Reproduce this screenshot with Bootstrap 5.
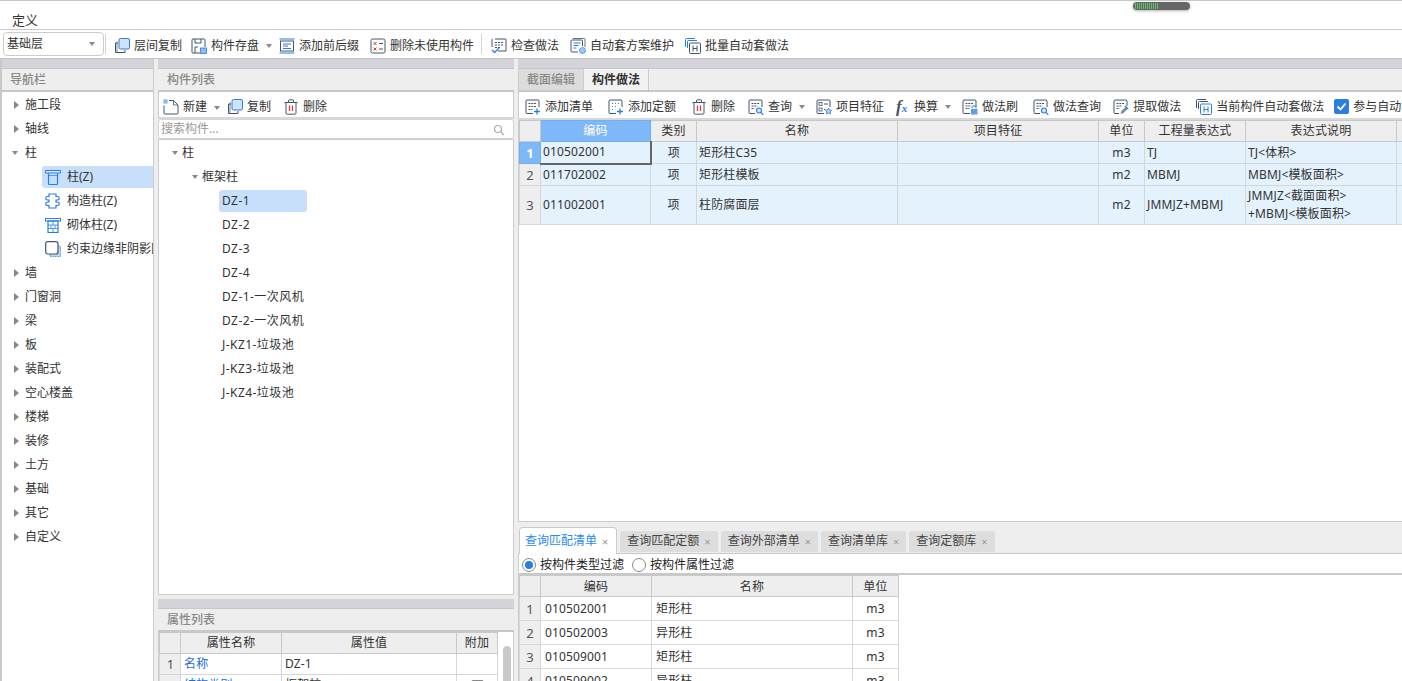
<!doctype html>
<html lang="zh-CN">
<head>
<meta charset="utf-8">
<title>定义</title>
<link href="https://cdn.jsdelivr.net/npm/bootstrap@5.3.0/dist/css/bootstrap.min.css" rel="stylesheet">
<style>
html,body{height:100%;overflow:hidden}
body{font:12px/1.4 "Noto Sans","Noto Sans CJK SC",sans-serif;color:#333;background:#eee}
.app{height:681px;width:1402px;position:relative;overflow:hidden}
.menu-row{height:30px;background:#fff;border-top:1px solid #c8c8c8;border-bottom:1px solid #c8c8c8;padding:10px 0 0 12px;font-size:13px;line-height:18px}
.tool-top{height:28px;background:#fff;padding:4px 0 0 3px}
.level-sel{width:101px;height:24px;border:1px solid #ccc;border-radius:4px;padding:0 0 0 3px;font-size:12px;margin-top:-4px}
.tb-sep{width:1px;height:20px;background:#d4d4d4;margin-top:-4px}
.tb-item{gap:4px;white-space:nowrap;flex:none}
.ic{width:16px;height:16px;flex:none;display:block}
.car-d{width:0;height:0;border-left:3px solid transparent;border-right:3px solid transparent;border-top:4px solid #888;flex:none}
.car-r{width:0;height:0;border-top:4px solid transparent;border-bottom:4px solid transparent;border-left:5px solid #888;flex:none}
.car-nav{margin:0 1px 0 -2px}
.main-area{height:623px;border-top:1px solid #c4c4c4;padding-left:0}
.pane-nav{width:154px;flex:none;border-left:2px solid #c8c8c8;background:#fff;border-right:1px solid #ccc}
.pane-mid{width:356px;flex:none;margin-left:4px}
.pane-right{width:884px;flex:none;margin-left:4px;min-width:0}
.cap-bar{height:10px;background:#d2d4d9;border-bottom:1px solid #c8c8c8;flex:none}
.title-bar{height:23px;background:#eee;border-bottom:2px solid #c8c8c8;padding:1px 0 0 9px;color:#888;font-weight:500;line-height:20px;flex:none}
.pane-nav .title-bar{padding-left:8px}
.nav-list{padding-top:1px}
.nav-row{height:24px;padding-left:12px;gap:6px;white-space:nowrap}
.nav-sub{height:24px;padding:1px 0 1px 40px;white-space:nowrap;overflow:hidden}
.nav-sub-in{height:22px;width:112px;gap:6px;padding-left:3px;border-radius:3px 0 0 3px;flex:none}
.nav-on{background:#c7dffa}
.bar-white{background:#fff;border-left:1px solid #ccc;border-right:1px solid #ccc;flex:none}
.bar-mid{height:27px;border-bottom:2px solid #d8d8d8;padding:6px 0 0 4px}
.search-row{height:20px;background:#fff;border:1px solid #d4d4d4;border-radius:3px;padding:1px 8px 0 2px;color:#999;flex:none;font-size:12px}
.tree{background:#fff;border:1px solid #ccc;height:456px;flex:none;padding-top:1px}
.tree-row{height:24px;white-space:nowrap;gap:4px}
.t1{padding-left:13px}.t2{padding-left:33px}.t3{padding-left:60px}
.tree-leaf{height:22px;width:88px;border-radius:3px;padding-left:3px;flex:none;letter-spacing:.45px}
.attr-pane{margin-top:4px}
.tabs-top{height:23px;background:#eee;border-bottom:2px solid #c8c8c8;flex:none;padding-left:0;border-left:1px solid #ccc}
.tp-off{width:65px;background:#dcdcdc;color:#888;font-weight:500;text-align:center;line-height:21px;border-right:1px solid #ccc}
.tp-on{width:65px;background:#f2f2f2;font-weight:700;text-align:center;line-height:21px;border-right:1px solid #ccc}
.bar-right{height:28px;border-bottom:2px solid #d8d8d8;padding:4px 0 0 6px;overflow:hidden;border-right:0}
.gt-wrap{background:#fff;border-left:1px solid #ccc;overflow:hidden}
.gt-up{height:402px;border-bottom:1px solid #ccc;border-right:0;flex:none}
.gt.table{table-layout:fixed;margin:0;border-collapse:collapse;--bs-table-bg:transparent;color:#333;border-color:#d6d6d6;font-size:12px}
.gt.table>:not(caption)>*>*{padding:0 2px;border:1px solid #d6d6d6;line-height:18px;vertical-align:middle;box-shadow:none;white-space:nowrap;overflow:hidden;color:#333;letter-spacing:.15px}
.gt.table>thead>tr>*{background:#eee;text-align:center;font-weight:400;border-color:#c8c8c8}
.gt.table>tbody>tr>.rn{background:#eee;text-align:center;color:#555;font-size:13px}
.tbl-up{width:917px}
.tbl-up thead tr{height:21px}
.tbl-up tbody tr{height:22px}
.tbl-up tbody tr.row-tall{height:39px}
.tbl-up tbody td{background:#e3f2fd}
.gt.table>thead>tr>.hd-on{background:#7fb8f8;color:#fff;border-color:#6fb0f5}
.gt.table>tbody>tr>.rn-on{background:#7fb8f8;color:#fff;font-weight:700;border-color:#6fb0f5}
.gt.table>tbody>tr>.cell-on{border-right:2px solid #666;border-bottom:2px solid #666}
.tc{text-align:center}
.c21{width:21px}.c110{width:110px}.c46{width:46px}.c201{width:201px}.c101{width:101px}.c151{width:151px}.c40{width:40px}.c111{width:111px}.c175{width:175px}.c41{width:41px}
.gap-row{height:5px;background:#eee;flex:none}
.btabs{height:27px;background:#eee;border-bottom:1px solid #c8c8c8;flex:none;padding-left:1px;gap:3px}
.btab{height:21px;background:#ddd;border-radius:3px 3px 0 0;padding:0 7px;gap:5px;white-space:nowrap;margin-top:4px;flex:none;color:#444}
.btab-on{height:27px;margin-top:0;background:#fff;border:1px solid #ccc;border-bottom:0;border-radius:4px 4px 0 0;color:#2a8cf0;padding:0 8px 0 5px;position:relative;z-index:1}
.btab .x{color:#999;font-size:11px;line-height:1}
.flt{height:21px;background:#fff;border-bottom:2px solid #c8c8c8;border-left:1px solid #ccc;padding:3px 0 0 3px;flex:none;color:#222}
.rad{width:14px;height:14px;border:1px solid #888;border-radius:50%;flex:none;background:#fff;display:flex;align-items:center;justify-content:center}
.rad-on::after{content:"";width:8px;height:8px;border-radius:50%;background:#2a7de1}
.tbl-low{width:379px}
.tbl-low thead tr{height:21px}
.tbl-low tbody tr{height:24px}
.gt.tbl-low>thead>tr>th{padding-top:1px}
.gt.tbl-low>tbody>tr>td{padding-left:4px}
.gt.tbl-low>tbody>tr>td.tc,.gt.tbl-low>tbody>tr>td.rn{padding-left:2px}
.tbl-attr{width:338px;flex:none}
.tbl-attr thead tr{height:21px}
.tbl-attr tbody tr{height:21px}
.gt.tbl-attr>tbody>tr>td{padding-left:3px}
.gt.table>tbody>tr>.lnk{color:#1f6be0}
.attr-body{height:60px;background:#fff;border-left:1px solid #ccc;border-right:1px solid #ccc;overflow:hidden}
.attr-scroll{width:16px;flex:none;background:#fff;padding-left:5px;padding-top:14px}
.attr-thumb{width:8px;height:60px;background:#c9c9c9;border-radius:4px}
.chk-mini{width:13px;height:13px;border:1px solid #888;border-radius:2px;margin:2px auto 0}
.auto-chk{width:15px;height:15px;border-radius:2px;background:#2a7de1;flex:none;display:flex;align-items:center;justify-content:center}
.fx-ic{font:italic 700 17px/16px "Liberation Serif",serif;color:#44546a;width:14px;height:16px;flex:none;white-space:nowrap}
.fx-ic span{font-size:11px;color:#2a7de1}
.hscroll{position:absolute;left:1133px;top:2px;width:57px;height:8px;background:#666;border-radius:4px;box-shadow:0 1px 3px rgba(0,0,0,.3);padding:1px 0 1px 2px;gap:1px;overflow:hidden}
.hscroll i{width:1px;height:6px;background:#5fc06a;flex:none}
.g1{margin-left:1px}.g8{margin-left:8px}.g9{margin-left:9px}.g10{margin-left:10px}.g11{margin-left:11px}.g12{margin-left:12px}.g13{margin-left:13px}.g15{margin-left:15px}.g7{margin-left:7px}
</style>
</head>
<body>
<svg width="0" height="0" class="position-absolute">
<defs>
<symbol id="i-copy" viewBox="0 0 16 16"><path d="M4 5H1.500v9.500H11V12" fill="none" stroke="#44546a"/><path d="M3 3.500V14" fill="none" stroke="#44546a" stroke-width=".7"/><rect x="5" y=".5" width="10.500" height="10.500" rx="1.500" fill="#cfe2fb" stroke="#2a7de1"/></symbol>
<symbol id="i-save" viewBox="0 0 16 16"><path d="M9 15H2a1 1 0 0 1-1-1V2a1 1 0 0 1 1-1h11a1 1 0 0 1 1 1v7" fill="none" stroke="#44546a"/><path d="M4 1v4h6V1M4 15V9h3" fill="none" stroke="#44546a"/><rect x="9.500" y="10" width="6" height="5.500" fill="#8fbdf3" stroke="#2a7de1" stroke-width=".8"/></symbol>
<symbol id="i-pre" viewBox="0 0 16 16"><path d="M.5 1h15M.5 15h15" stroke="#2a7de1" fill="none"/><rect x="1.500" y="3" width="13" height="10" fill="none" stroke="#44546a"/><path d="M4 6h8M4 8h5M4 10.500h8" stroke="#2a7de1" fill="none"/></symbol>
<symbol id="i-del-un" viewBox="0 0 16 16"><rect x="1" y="1" width="14" height="14" rx="1.500" fill="none" stroke="#44546a"/><path d="M3.500 4l3 3m0-3l-3 3M3.500 9.500l3 3m0-3l-3 3" stroke="#e5383b" fill="none"/><path d="M9 5.500h4M9 11h4" stroke="#44546a" fill="none"/></symbol>
<symbol id="i-check" viewBox="0 0 16 16"><path d="M4 1h10.500a.5.5 0 0 1 .5.5V13H7M1 9V1.500a.5.5 0 0 1 .5-.5" fill="none" stroke="#44546a"/><path d="M4 4.500h8M4 7h8M4 9.500h5" stroke="#44546a" stroke-dasharray="2 1"/><path d="M1 12l2.500 2.500L8 10" fill="none" stroke="#2a7de1" stroke-width="1.300"/></symbol>
<symbol id="i-auto" viewBox="0 0 16 16"><path d="M3 1V.5h11a1 1 0 0 1 1 1V9" fill="none" stroke="#44546a" stroke-width=".8"/><path d="M8 14H2a1 1 0 0 1-1-1V3a1 1 0 0 1 1-1h9.500a1 1 0 0 1 1 1v5" fill="none" stroke="#44546a"/><path d="M3.500 5h7M3.500 7.500h5M3.500 10h3" stroke="#2a7de1"/><circle cx="12.500" cy="12.500" r="3" fill="#9cc5f5" stroke="#2a7de1" stroke-dasharray="1.500 .7"/></symbol>
<symbol id="i-batch" viewBox="0 0 16 16"><path d="M.5 9V1.500a1 1 0 0 1 1-1H10M2.500 10V3.500a1 1 0 0 1 1-1H12" fill="none" stroke="#2a7de1"/><rect x="4.500" y="5" width="11" height="10.500" rx="1" fill="none" stroke="#44546a"/><path d="M8 7.500v6M12 7.500v6M8 10.500h4" stroke="#44546a" fill="none"/></symbol>
<symbol id="i-cur" viewBox="0 0 16 16"><path d="M.5 9V1.500a1 1 0 0 1 1-1H10M2.500 10V3.500a1 1 0 0 1 1-1H12" fill="none" stroke="#44546a"/><rect x="4.500" y="5" width="11" height="10.500" rx="1" fill="#fff" stroke="#2a7de1"/><path d="M8 7.500v6M12 7.500v6M8 10.500h4" stroke="#2a7de1" fill="none"/></symbol>
<symbol id="i-col" viewBox="0 0 16 16"><path d="M.5 1.500h15v2.500H.5z" fill="#dbe9fc" stroke="#2a7de1"/><path d="M3.500 4.500v10a1 1 0 0 0 1 1h7a1 1 0 0 0 1-1v-10" fill="none" stroke="#2a7de1" stroke-width="1.200"/><path d="M3 6.500h10" stroke="#2a7de1" stroke-width=".7"/></symbol>
<symbol id="i-cog" viewBox="0 0 16 16"><path d="M4 1h7v2.500h1.500a1.500 1.500 0 0 1 0 3.500H11v2h1.500a1.500 1.500 0 0 1 0 3.500H11V15H4v-2.500H2.500a1.500 1.500 0 0 1 0-3.500H4V7H2.500a1.500 1.500 0 0 1 0-3.500H4z" fill="none" stroke="#2a7de1" stroke-width="1.200"/></symbol>
<symbol id="i-brick" viewBox="0 0 16 16"><rect x=".5" y="1.500" width="15" height="2.500" fill="none" stroke="#2a7de1"/><rect x="3" y="4" width="10" height="11.500" fill="none" stroke="#2a7de1" stroke-width="1.200"/><path d="M3 8h10M3 11.500h10M8 4v4M6 8v3.500M10 8v3.500M8 11.500v4" stroke="#2a7de1" stroke-width=".8"/></symbol>
<symbol id="i-edge" viewBox="0 0 16 16"><path d="M13 5h2.500v10.500H5V13" fill="#bcd7f8" stroke="#2a7de1" stroke-width=".8" stroke-dasharray="1 .6"/><rect x=".7" y=".7" width="12.300" height="12.300" rx="2" fill="#fff" stroke="#44546a" stroke-width="1.200"/></symbol>
<symbol id="i-new" viewBox="0 0 16 16"><path d="M6 1.500h4.500L15 6v8a1 1 0 0 1-1 1H2a1 1 0 0 1-1-1V6.500" fill="none" stroke="#44546a"/><path d="M10.500 1.500V6H15" fill="none" stroke="#44546a" stroke-width=".8"/><path d="M.5.500h4v4h-4z" fill="#6aa5ee"/><path d="M1.500 1.500l2 2m0-2l-2 2" stroke="#fff" stroke-width=".6"/></symbol>
<symbol id="i-trash" viewBox="0 0 16 16"><path d="M1.500 3.500h13M5.500 3.500V1.500a.7.7 0 0 1 .7-.7h3.600a.7.7 0 0 1 .7.700v2" fill="none" stroke="#44546a"/><path d="M3 3.500v10.500a1.200 1.200 0 0 0 1.200 1.200h7.600a1.200 1.200 0 0 0 1.200-1.200V3.500" fill="none" stroke="#44546a"/><path d="M6.500 6.500v5.500M9.500 6.500v5.500" stroke="#e5383b" stroke-width="1.300"/></symbol>
<symbol id="i-addl" viewBox="0 0 16 16"><path d="M8 14.500H2a1 1 0 0 1-1-1V2a1 1 0 0 1 1-1h11a1 1 0 0 1 1 1v6" fill="none" stroke="#44546a"/><path d="M3.500 4.500h8M3.500 7.500h8M3.500 10.500h4" stroke="#44546a" stroke-dasharray="2 .8"/><path d="M12 9.500v6M9 12.500h6" stroke="#2a7de1" stroke-width="1.300"/></symbol>
<symbol id="i-addq" viewBox="0 0 16 16"><path d="M8 14.500H2a1 1 0 0 1-1-1V2a1 1 0 0 1 1-1h11a1 1 0 0 1 1 1v6" fill="none" stroke="#44546a"/><path d="M4 4.500h1M7 4.500h1M10 4.500h1M4 7.500h1M7 7.500h1M4 10.500h1" stroke="#2a7de1"/><path d="M12 9.500v6M9 12.500h6" stroke="#2a7de1" stroke-width="1.300"/></symbol>
<symbol id="i-query" viewBox="0 0 16 16"><path d="M7 14.500H2a1 1 0 0 1-1-1V2a1 1 0 0 1 1-1h11a1 1 0 0 1 1 1v6" fill="none" stroke="#44546a"/><path d="M3.500 4.500h8M3.500 7h6M3.500 9.500h3" stroke="#44546a" stroke-dasharray="2 .8"/><circle cx="11" cy="11.500" r="2.500" fill="#d6e6fb" stroke="#2a7de1" stroke-width="1.100"/><path d="M13 13.500l2.300 2.300" stroke="#2a7de1" stroke-width="1.200"/></symbol>
<symbol id="i-item" viewBox="0 0 16 16"><path d="M8 14.500H2a1 1 0 0 1-1-1V2a1 1 0 0 1 1-1h11a1 1 0 0 1 1 1v6" fill="none" stroke="#44546a"/><rect x="3" y="3.500" width="3" height="3" fill="none" stroke="#44546a" stroke-width=".8"/><rect x="3" y="9" width="3" height="3" fill="none" stroke="#44546a" stroke-width=".8"/><path d="M8 5h4M8 10.500h1" stroke="#44546a"/><path d="M12.500 9l1 2 2.200.3-1.600 1.500.4 2.200-2-1.100-2 1.100.4-2.200-1.600-1.500 2.200-.3z" fill="#bcd7f8" stroke="#2a7de1" stroke-width=".8"/></symbol>
<symbol id="i-brush" viewBox="0 0 16 16"><path d="M8 14.500H2a1 1 0 0 1-1-1V2a1 1 0 0 1 1-1h11a1 1 0 0 1 1 1v6" fill="none" stroke="#44546a"/><path d="M3.500 4.500h8M3.500 7h6M3.500 9.500h4" stroke="#44546a" stroke-dasharray="2 .8"/><path d="M10 9.500v-.7a2 2 0 0 1 4 0v.7" fill="none" stroke="#2a7de1"/><rect x="9" y="10" width="6.500" height="5.500" fill="#5f9deb"/></symbol>
<symbol id="i-ext" viewBox="0 0 16 16"><path d="M6 14.500H2a1 1 0 0 1-1-1V2a1 1 0 0 1 1-1h11a1 1 0 0 1 1 1v5" fill="none" stroke="#44546a"/><path d="M3.500 4.500h8M3.500 7h5M3.500 9.500h3" stroke="#44546a" stroke-dasharray="2 .8"/><path d="M7.500 15l1-3 4-4 2 2-4 4z" fill="#7a8aa0"/><path d="M12 7l3 3" stroke="#2a7de1" stroke-width="1.400"/></symbol>
</defs>
</svg>

<div class="app d-flex flex-column">
  <div class="menu-row">定义</div>
  <div class="tool-top d-flex align-items-center">
    <div class="level-sel d-flex align-items-center justify-content-between pe-1"><span>基础层</span><span class="car-d me-1"></span></div>
    <div class="tb-sep g1"></div>
    <div class="tb-item d-flex align-items-center g8"><svg class="ic"><use href="#i-copy"/></svg>层间复制</div>
    <div class="tb-item d-flex align-items-center g9"><svg class="ic"><use href="#i-save"/></svg>构件存盘</div>
    <span class="car-d g7"></span>
    <div class="tb-item d-flex align-items-center g7"><svg class="ic"><use href="#i-pre"/></svg>添加前后缀</div>
    <div class="tb-item d-flex align-items-center g11"><svg class="ic"><use href="#i-del-un"/></svg>删除未使用构件</div>
    <div class="tb-sep g7"></div>
    <div class="tb-item d-flex align-items-center g9"><svg class="ic"><use href="#i-check"/></svg>检查做法</div>
    <div class="tb-item d-flex align-items-center g11"><svg class="ic"><use href="#i-auto"/></svg>自动套方案维护</div>
    <div class="tb-item d-flex align-items-center g11"><svg class="ic"><use href="#i-batch"/></svg>批量自动套做法</div>
  </div>

  <div class="main-area d-flex">
    <div class="pane-nav d-flex flex-column">
      <div class="cap-bar"></div>
      <div class="title-bar">导航栏</div>
      <div class="nav-list">
      <div class="nav-row d-flex align-items-center"><span class="car-r"></span>施工段</div>
      <div class="nav-row d-flex align-items-center"><span class="car-r"></span>轴线</div>
      <div class="nav-row d-flex align-items-center"><span class="car-d car-nav"></span>柱</div>
      <div class="nav-sub d-flex"><div class="nav-sub-in nav-on d-flex align-items-center"><svg class="ic"><use href="#i-col"/></svg>柱(Z)</div></div>
      <div class="nav-sub d-flex"><div class="nav-sub-in d-flex align-items-center"><svg class="ic"><use href="#i-cog"/></svg>构造柱(Z)</div></div>
      <div class="nav-sub d-flex"><div class="nav-sub-in d-flex align-items-center"><svg class="ic"><use href="#i-brick"/></svg>砌体柱(Z)</div></div>
      <div class="nav-sub d-flex"><div class="nav-sub-in d-flex align-items-center"><svg class="ic"><use href="#i-edge"/></svg>约束边缘非阴影区暗柱</div></div>
      <div class="nav-row d-flex align-items-center"><span class="car-r"></span>墙</div>
      <div class="nav-row d-flex align-items-center"><span class="car-r"></span>门窗洞</div>
      <div class="nav-row d-flex align-items-center"><span class="car-r"></span>梁</div>
      <div class="nav-row d-flex align-items-center"><span class="car-r"></span>板</div>
      <div class="nav-row d-flex align-items-center"><span class="car-r"></span>装配式</div>
      <div class="nav-row d-flex align-items-center"><span class="car-r"></span>空心楼盖</div>
      <div class="nav-row d-flex align-items-center"><span class="car-r"></span>楼梯</div>
      <div class="nav-row d-flex align-items-center"><span class="car-r"></span>装修</div>
      <div class="nav-row d-flex align-items-center"><span class="car-r"></span>土方</div>
      <div class="nav-row d-flex align-items-center"><span class="car-r"></span>基础</div>
      <div class="nav-row d-flex align-items-center"><span class="car-r"></span>其它</div>
      <div class="nav-row d-flex align-items-center"><span class="car-r"></span>自定义</div>
      </div>
    </div>

    <div class="pane-mid d-flex flex-column">
      <div class="cap-bar"></div>
      <div class="title-bar">构件列表</div>
      <div class="bar-white bar-mid d-flex align-items-center">
        <div class="tb-item d-flex align-items-center"><svg class="ic"><use href="#i-new"/></svg>新建</div>
        <span class="car-d g7"></span>
        <div class="tb-item d-flex align-items-center g7"><svg class="ic"><use href="#i-copy"/></svg>复制</div>
        <div class="tb-item d-flex align-items-center g12"><svg class="ic"><use href="#i-trash"/></svg>删除</div>
      </div>
      <div class="search-row d-flex align-items-center justify-content-between"><span>搜索构件...</span>
        <svg width="12" height="12" viewBox="0 0 12 12"><circle cx="5" cy="5" r="3.500" fill="none" stroke="#aaa" stroke-width="1.200"/><path d="M8 8l3 3" stroke="#aaa" stroke-width="1.200"/></svg></div>
      <div class="tree">
        <div class="tree-row t1 d-flex align-items-center"><span class="car-d"></span>柱</div>
        <div class="tree-row t2 d-flex align-items-center"><span class="car-d"></span>框架柱</div>
        <div class="tree-row t3 d-flex align-items-center"><div class="tree-leaf nav-on d-flex align-items-center">DZ-1</div></div>
        <div class="tree-row t3 d-flex align-items-center"><div class="tree-leaf d-flex align-items-center">DZ-2</div></div>
        <div class="tree-row t3 d-flex align-items-center"><div class="tree-leaf d-flex align-items-center">DZ-3</div></div>
        <div class="tree-row t3 d-flex align-items-center"><div class="tree-leaf d-flex align-items-center">DZ-4</div></div>
        <div class="tree-row t3 d-flex align-items-center"><div class="tree-leaf d-flex align-items-center">DZ-1-一次风机</div></div>
        <div class="tree-row t3 d-flex align-items-center"><div class="tree-leaf d-flex align-items-center">DZ-2-一次风机</div></div>
        <div class="tree-row t3 d-flex align-items-center"><div class="tree-leaf d-flex align-items-center">J-KZ1-垃圾池</div></div>
        <div class="tree-row t3 d-flex align-items-center"><div class="tree-leaf d-flex align-items-center">J-KZ3-垃圾池</div></div>
        <div class="tree-row t3 d-flex align-items-center"><div class="tree-leaf d-flex align-items-center">J-KZ4-垃圾池</div></div>
      </div>
      <div class="attr-pane d-flex flex-column">
        <div class="cap-bar"></div>
        <div class="title-bar">属性列表</div>
        <div class="attr-body d-flex">
          <table class="table gt tbl-attr">
            <colgroup><col class="c21"><col class="c101"><col class="c175"><col class="c41"></colgroup>
            <thead><tr><th></th><th>属性名称</th><th>属性值</th><th>附加</th></tr></thead>
            <tbody>
              <tr><td class="rn">1</td><td class="lnk">名称</td><td>DZ-1</td><td></td></tr>
              <tr><td class="rn">2</td><td class="lnk">结构类别</td><td>框架柱</td><td><div class="chk-mini"></div></td></tr>
            </tbody>
          </table>
          <div class="attr-scroll"><div class="attr-thumb"></div></div>
        </div>
      </div>
    </div>

    <div class="pane-right d-flex flex-column">
      <div class="cap-bar"></div>
      <div class="tabs-top d-flex"><div class="tp-off">截面编辑</div><div class="tp-on">构件做法</div></div>
      <div class="bar-white bar-right d-flex align-items-center">
        <div class="tb-item d-flex align-items-center"><svg class="ic"><use href="#i-addl"/></svg>添加清单</div>
        <div class="tb-item d-flex align-items-center g15"><svg class="ic"><use href="#i-addq"/></svg>添加定额</div>
        <div class="tb-item d-flex align-items-center g15"><svg class="ic"><use href="#i-trash"/></svg>删除</div>
        <div class="tb-item d-flex align-items-center g13"><svg class="ic"><use href="#i-query"/></svg>查询</div>
        <span class="car-d g7"></span>
        <div class="tb-item d-flex align-items-center g11"><svg class="ic"><use href="#i-item"/></svg>项目特征</div>
        <div class="tb-item d-flex align-items-center g12"><span class="fx-ic">f<span>x</span></span>换算</div>
        <span class="car-d g7"></span>
        <div class="tb-item d-flex align-items-center g11"><svg class="ic"><use href="#i-brush"/></svg>做法刷</div>
        <div class="tb-item d-flex align-items-center g15"><svg class="ic"><use href="#i-query"/></svg>做法查询</div>
        <div class="tb-item d-flex align-items-center g12"><svg class="ic"><use href="#i-ext"/></svg>提取做法</div>
        <div class="tb-item d-flex align-items-center g15"><svg class="ic"><use href="#i-cur"/></svg>当前构件自动套做法</div>
        <div class="tb-item d-flex align-items-center g10"><span class="auto-chk"><svg width="11" height="11" viewBox="0 0 11 11"><path d="M1.500 5.500l3 3 5-6" fill="none" stroke="#fff" stroke-width="1.800"/></svg></span>参与自动套</div>
      </div>
      <div class="gt-wrap gt-up">
        <table class="table gt tbl-up">
          <colgroup><col class="c21"><col class="c110"><col class="c46"><col class="c201"><col class="c201"><col class="c46"><col class="c101"><col class="c151"><col class="c40"></colgroup>
          <thead><tr><th></th><th class="hd-on">编码</th><th>类别</th><th>名称</th><th>项目特征</th><th>单位</th><th>工程量表达式</th><th>表达式说明</th><th></th></tr></thead>
          <tbody>
            <tr><td class="rn rn-on">1</td><td class="cell-on">010502001</td><td class="tc">项</td><td>矩形柱C35</td><td></td><td class="tc">m3</td><td>TJ</td><td>TJ&lt;体积&gt;</td><td></td></tr>
            <tr><td class="rn">2</td><td>011702002</td><td class="tc">项</td><td>矩形柱模板</td><td></td><td class="tc">m2</td><td>MBMJ</td><td>MBMJ&lt;模板面积&gt;</td><td></td></tr>
            <tr class="row-tall"><td class="rn">3</td><td>011002001</td><td class="tc">项</td><td>柱防腐面层</td><td></td><td class="tc">m2</td><td>JMMJZ+MBMJ</td><td>JMMJZ&lt;截面面积&gt;<br>+MBMJ&lt;模板面积&gt;</td><td></td></tr>
          </tbody>
        </table>
      </div>
      <div class="gap-row"></div>
      <div class="btabs d-flex">
        <div class="btab btab-on d-flex align-items-center">查询匹配清单<span class="x">×</span></div>
        <div class="btab d-flex align-items-center">查询匹配定额<span class="x">×</span></div>
        <div class="btab d-flex align-items-center">查询外部清单<span class="x">×</span></div>
        <div class="btab d-flex align-items-center">查询清单库<span class="x">×</span></div>
        <div class="btab d-flex align-items-center">查询定额库<span class="x">×</span></div>
      </div>
      <div class="flt d-flex align-items-center"><span class="rad rad-on me-1"></span>按构件类型过滤<span class="rad ms-2 me-1"></span>按构件属性过滤</div>
      <div class="gt-wrap flex-grow-1">
        <table class="table gt tbl-low">
          <colgroup><col class="c21"><col class="c111"><col class="c201"><col class="c46"></colgroup>
          <thead><tr><th></th><th>编码</th><th>名称</th><th>单位</th></tr></thead>
          <tbody>
            <tr><td class="rn">1</td><td>010502001</td><td>矩形柱</td><td class="tc">m3</td></tr>
            <tr><td class="rn">2</td><td>010502003</td><td>异形柱</td><td class="tc">m3</td></tr>
            <tr><td class="rn">3</td><td>010509001</td><td>矩形柱</td><td class="tc">m3</td></tr>
            <tr><td class="rn">4</td><td>010509002</td><td>异形柱</td><td class="tc">m3</td></tr>
          </tbody>
        </table>
      </div>
    </div>
  </div>
  <div class="hscroll d-flex"><i></i><i></i><i></i><i></i><i></i><i></i><i></i><i></i><i></i><i></i><i></i><i></i></div>
</div>
<script src="https://cdn.jsdelivr.net/npm/bootstrap@5.3.0/dist/js/bootstrap.bundle.min.js"></script>
</body>
</html>
